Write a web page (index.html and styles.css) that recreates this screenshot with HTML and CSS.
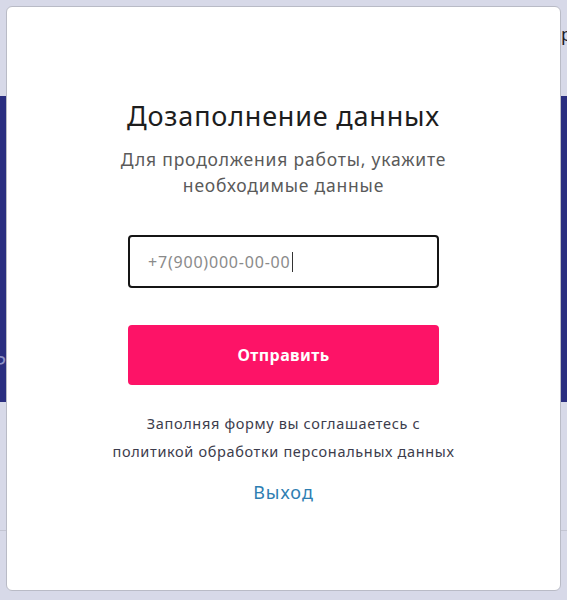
FILE: index.html
```html
<!DOCTYPE html>
<html lang="ru">
<head>
<meta charset="utf-8">
<title>Дозаполнение данных</title>
<link rel="stylesheet" href="styles.css">
</head>
<body>
<div class="page">
  <header class="top"><span class="top-text">р</span></header>
  <section class="band"><span class="band-text">Р</span></section>
  <section class="rest"><div class="rest-line"></div></section>
</div>
<div class="overlay">
  <div class="modal">
    <h1 class="title">Дозаполнение данных</h1>
    <p class="subtitle">Для продолжения работы, укажите<br>необходимые данные</p>
    <div class="field"><span class="placeholder">+7(900)000-00-00</span><span class="caret"></span></div>
    <button class="submit" type="button">Отправить</button>
    <p class="note">Заполняя форму вы соглашаетесь с<br>политикой обработки персональных данных</p>
    <a class="exit" href="#">Выход</a>
  </div>
</div>
</body>
</html>
```
FILE: styles.css
```css
* { box-sizing: border-box; }
html, body { margin: 0; padding: 0; }
body {
  width: 567px;
  height: 600px;
  overflow: hidden;
  background: #d7d9e8;
  font-family: "Noto Sans", "Open Sans", sans-serif;
  position: relative;
}
.page { display: flex; flex-direction: column; }
.top {
  height: 96px;
  display: flex;
  justify-content: flex-end;
  padding-top: 22px;
}
.top-text { font-size: 18px; line-height: 24px; color: #1e1e2a; width: 6px; overflow: hidden; }
.band {
  height: 306px;
  background: #2a2e80;
  display: flex;
  align-items: flex-end;
  padding-bottom: 26px;
}
.band-text { font-size: 20px; line-height: 26px; color: #8e93c8; width: 6px; overflow: hidden; direction: rtl; }
.rest { height: 198px; padding-top: 128px; }
.rest-line { height: 1px; background: #c3c5d2; }

.overlay {
  position: absolute;
  inset: 0;
  padding: 6px 6px 9px 6px;
  display: flex;
}
.modal {
  flex: 1;
  background: #fff;
  border: 1px solid #b9bbc6;
  border-radius: 6px;
  display: flex;
  flex-direction: column;
  align-items: center;
  padding-top: 91px;
}
.title {
  margin: 0;
  font-size: 27px;
  font-weight: 400;
  color: #1d1d1d;
  line-height: 36px;
  letter-spacing: 0.8px;
}
.subtitle {
  margin: 12px 0 0;
  font-size: 17.5px;
  line-height: 26px;
  color: #5a5a5a;
  text-align: center;
  letter-spacing: 0.8px;
}
.field {
  margin-top: 37px;
  width: 311px;
  height: 53px;
  border: 2px solid #151515;
  border-radius: 4px;
  display: flex;
  align-items: center;
  padding-left: 18px;
}
.placeholder { font-size: 16px; color: #8a8a8a; letter-spacing: 0.8px; }
.caret { width: 1px; height: 20px; background: #333; margin-left: 1px; }
.submit {
  margin-top: 37px;
  width: 311px;
  height: 60px;
  border: none;
  border-radius: 4px;
  background: #fd1367;
  color: #fff;
  font-family: "Noto Sans", sans-serif;
  font-weight: 700;
  font-size: 16px;
  letter-spacing: 0.4px;
}
.note {
  margin: 24px 0 0;
  font-size: 14.5px;
  line-height: 28px;
  color: #3c3c4c;
  text-align: center;
  letter-spacing: 0.65px;
}
.exit {
  margin-top: 15px;
  font-size: 18px;
  color: #2d7eb2;
  text-decoration: none;
  letter-spacing: 1px;
}
```
